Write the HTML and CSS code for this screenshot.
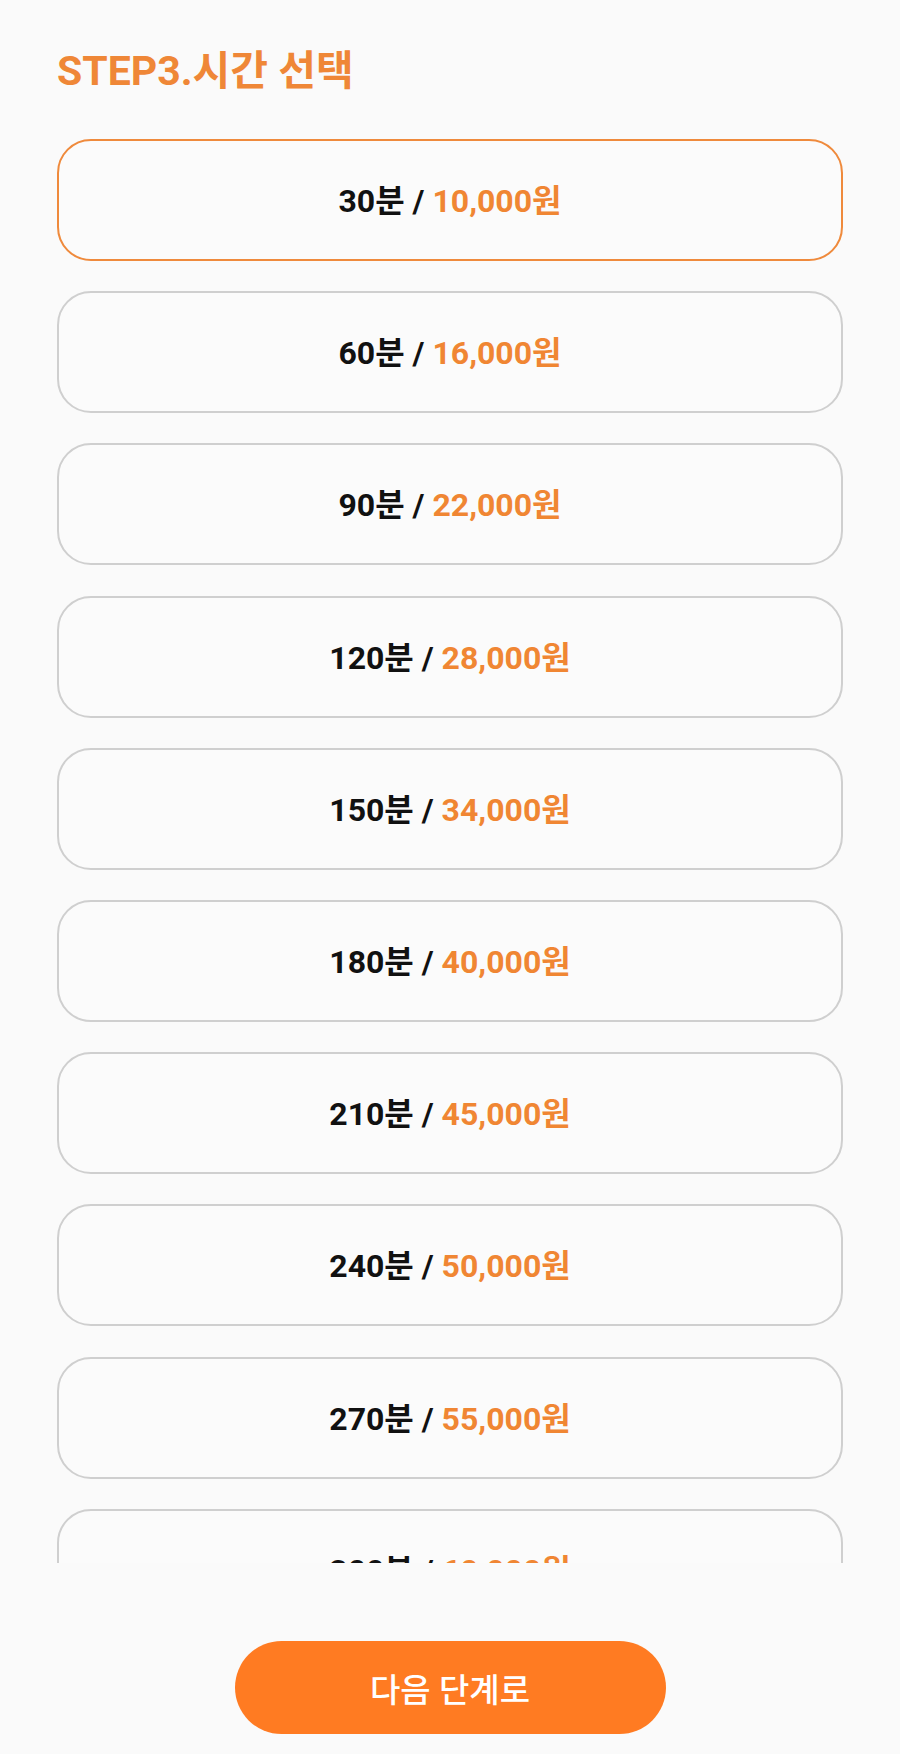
FILE: index.html
```html
<!DOCTYPE html>
<html>
<head>
	<title>시간 선택</title>
	<link rel="stylesheet" href="styles.css">
</head>
<body>

	<div id="content">
		<h1 class="step-title">STEP3.시간 선택</h1>

		<div class="time-list">
			<div class="time-item selected"><span class="min">30분 / </span><span class="price">10,000원</span></div>
			<div class="time-item"><span class="min">60분 / </span><span class="price">16,000원</span></div>
			<div class="time-item"><span class="min">90분 / </span><span class="price">22,000원</span></div>
			<div class="time-item"><span class="min">120분 / </span><span class="price">28,000원</span></div>
			<div class="time-item"><span class="min">150분 / </span><span class="price">34,000원</span></div>
			<div class="time-item"><span class="min">180분 / </span><span class="price">40,000원</span></div>
			<div class="time-item"><span class="min">210분 / </span><span class="price">45,000원</span></div>
			<div class="time-item"><span class="min">240분 / </span><span class="price">50,000원</span></div>
			<div class="time-item"><span class="min">270분 / </span><span class="price">55,000원</span></div>
			<div class="time-item"><span class="min">300분 / </span><span class="price">60,000원</span></div>
		</div>
	</div>

	<div class="bottom">
		<button class="next-btn">다음 단계로</button>
	</div>

</body>
</html>
```

FILE: styles.css
```css
*{
	box-sizing: border-box;
}
body{
	margin: 0;
	background-color: #fafafa;
	font-family: Roboto, "Noto Sans CJK KR", sans-serif;
}

#content{
	padding: 0 57px;
}
.step-title{
	margin: 0;
	padding-top: 49px;
	height: 139px;
	font-size: 41px;
	line-height: 44px;
	font-weight: 700;
	color: #ef8737;
}

.time-list{
	height: 1424px;
	overflow: hidden;
	display: flex;
	flex-direction: column;
	gap: 30.2px;
}
.time-item{
	flex: none;
	height: 122px;
	padding-bottom: 4px;
	border: 2px solid #cfcfcf;
	border-radius: 34px;
	background-color: #fbfbfb;
	display: flex;
	align-items: center;
	justify-content: center;
	font-size: 32px;
	font-weight: 700;
	color: #111;
}
.time-item.selected{
	border-color: #ef8a3c;
}
.time-item .min{
	white-space: pre;
}
.time-item .price{
	color: #f08633;
}

.bottom{
	display: flex;
	justify-content: center;
	padding-top: 78px;
}
.next-btn{
	width: 431px;
	height: 93px;
	border: none;
	border-radius: 47px;
	background-color: #ff7b22;
	color: #fff;
	font-family: Roboto, "Noto Sans CJK KR", sans-serif;
	font-size: 33px;
	font-weight: 500;
}
```
